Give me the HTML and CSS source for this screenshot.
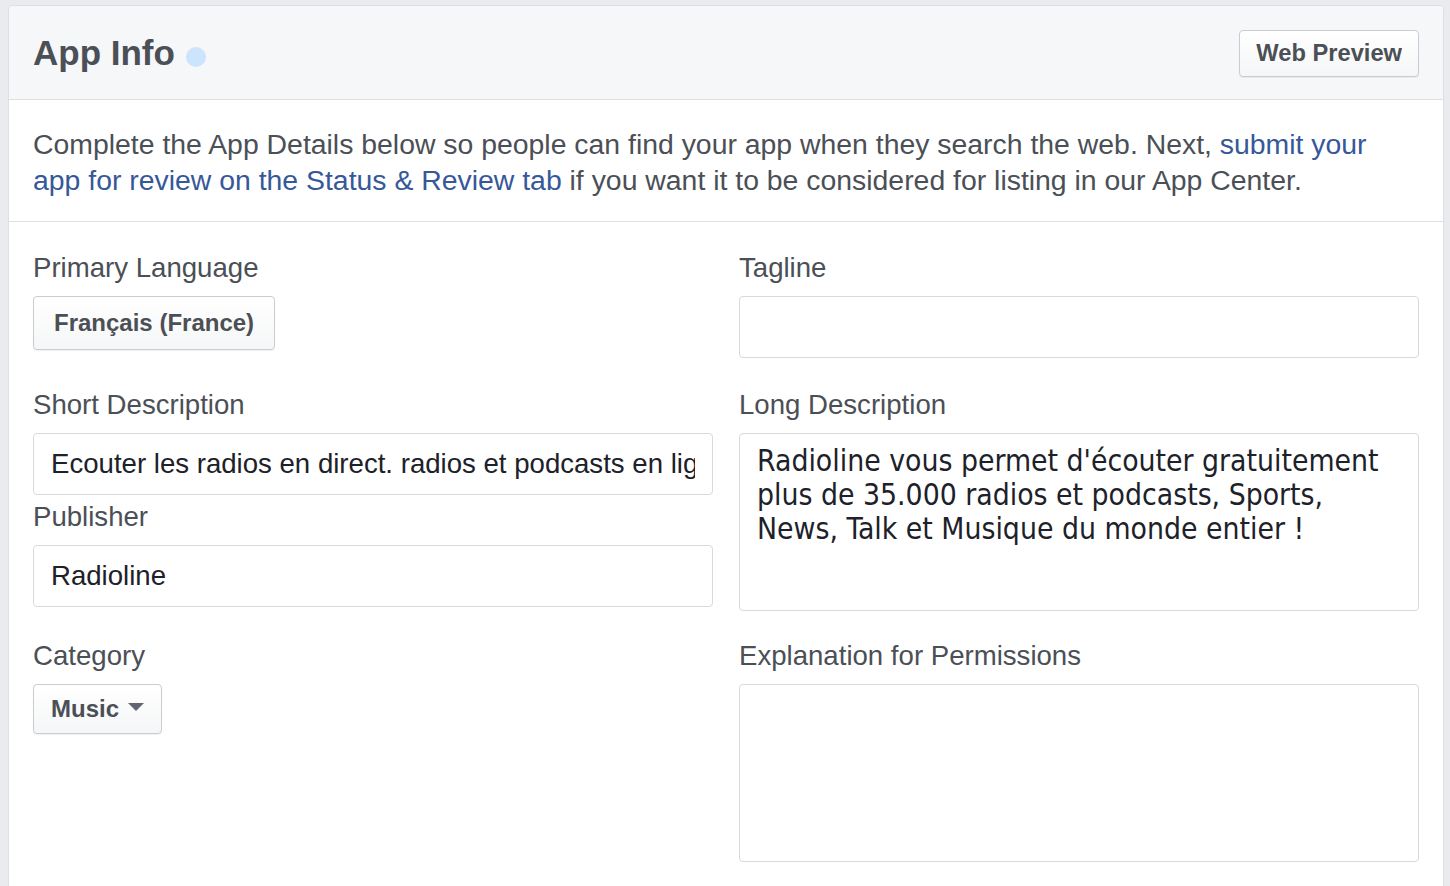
FILE: index.html
```html
<!DOCTYPE html>
<html>
<head>
<meta charset="utf-8">
<link rel="stylesheet" href="styles.css">
</head>
<body>
<div class="card">
  <div class="card-header">
    <h1 class="title">App Info</h1>
    <span class="dot"></span>
    <button class="btn btn-preview">Web Preview</button>
  </div>
  <div class="intro">
    Complete the App Details below so people can find your app when they search the web. Next, <a class="link">submit your<br>app for review on the Status &amp; Review tab</a> if you want it to be considered for listing in our App Center.
  </div>
  <div class="form">
    <div class="row">
      <div class="col">
        <div class="label">Primary Language</div>
        <button class="btn btn-lang">Français (France)</button>
      </div>
      <div class="col">
        <div class="label">Tagline</div>
        <input class="input" type="text" value="">
      </div>
    </div>
    <div class="row">
      <div class="col">
        <div class="label">Short Description</div>
        <input class="input" type="text" value="Ecouter les radios en direct. radios et podcasts en ligne gratuitement">
        <div class="label label-tight">Publisher</div>
        <input class="input" type="text" value="Radioline">
      </div>
      <div class="col">
        <div class="label">Long Description</div>
        <textarea class="textarea">Radioline vous permet d'écouter gratuitement plus de 35.000 radios et podcasts, Sports, News, Talk et Musique du monde entier !</textarea>
      </div>
    </div>
    <div class="row row-last">
      <div class="col">
        <div class="label">Category</div>
        <button class="btn btn-cat">Music <span class="caret"></span></button>
      </div>
      <div class="col">
        <div class="label">Explanation for Permissions</div>
        <textarea class="textarea"></textarea>
      </div>
    </div>
  </div>
</div>
</body>
</html>
```
FILE: styles.css
```css
html, body {
  margin: 0;
  overflow: hidden;
}
body {
  background: #e9ebee;
  padding: 5px 6px 0 8px;
  font-family: "Liberation Sans", Arial, sans-serif;
  color: #4b4f56;
}
.card {
  background: #fff;
  border: 1px solid #dddfe2;
  border-radius: 4px 4px 0 0;
  height: 900px;
}
.card-header {
  height: 93px;
  background: #f6f7f9;
  border-bottom: 1px solid #dddfe2;
  border-radius: 4px 4px 0 0;
  display: flex;
  align-items: center;
  padding: 0 24px;
}
.title {
  margin: 0;
  font-size: 35px;
  font-weight: bold;
  color: #4b4f56;
  line-height: 40px;
}
.dot {
  width: 20px;
  height: 20px;
  border-radius: 50%;
  background: #cce4fd;
  margin-left: 11px;
  margin-top: 8px;
}
.btn {
  font-family: "Liberation Sans", Arial, sans-serif;
  font-weight: bold;
  font-size: 24px;
  color: #4b4f56;
  background: linear-gradient(#ffffff, #f5f6f7);
  border: 1px solid #c9ccd1;
  border-radius: 4px;
  box-shadow: 0 1px 1px rgba(0,0,0,0.06);
  padding: 0 20px;
  cursor: pointer;
}
.btn-preview {
  margin-left: auto;
  height: 47px;
  font-size: 23.7px;
  padding: 0 16px;
  margin-top: 2px;
}
.intro {
  font-size: 28.4px;
  line-height: 36px;
  padding: 26px 24px 23px;
  border-bottom: 1px solid #dddfe2;
}
.link {
  color: #365899;
  text-decoration: none;
}
.form {
  padding: 29px 24px 0;
  display: flex;
  flex-direction: column;
  gap: 30px;
}
.row {
  display: flex;
  gap: 26px;
}
.row-last {
  margin-top: -2px;
}
.col {
  flex: 1;
  display: flex;
  flex-direction: column;
  align-items: flex-start;
}
.label {
  font-size: 27.6px;
  line-height: 34px;
  margin-bottom: 11px;
  color: #4b4f56;
}
.label-tight {
  margin-top: 5px;
}
.input {
  box-sizing: border-box;
  width: 100%;
  height: 62px;
  border: 1px solid #d6d9dd;
  border-radius: 4px;
  padding: 0 17px;
  font-family: "Liberation Sans", Arial, sans-serif;
  font-size: 27.6px;
  color: #1d2129;
  background: #fff;
  outline: none;
}
.textarea {
  box-sizing: border-box;
  width: 100%;
  height: 178px;
  border: 1px solid #d6d9dd;
  border-radius: 4px;
  padding: 10px 17px;
  font-family: "DejaVu Sans Condensed", "DejaVu Sans", sans-serif;
  font-size: 29.8px;
  line-height: 34px;
  color: #1d2129;
  resize: none;
  outline: none;
  overflow: hidden;
}
.btn-lang {
  height: 54px;
}
.btn-cat {
  height: 50px;
  padding: 0 17px;
  display: flex;
  align-items: center;
  gap: 9px;
}
.caret {
  width: 0;
  height: 0;
  border-left: 8px solid transparent;
  border-right: 8px solid transparent;
  border-top: 8px solid #606770;
  margin-top: -4px;
}
```
